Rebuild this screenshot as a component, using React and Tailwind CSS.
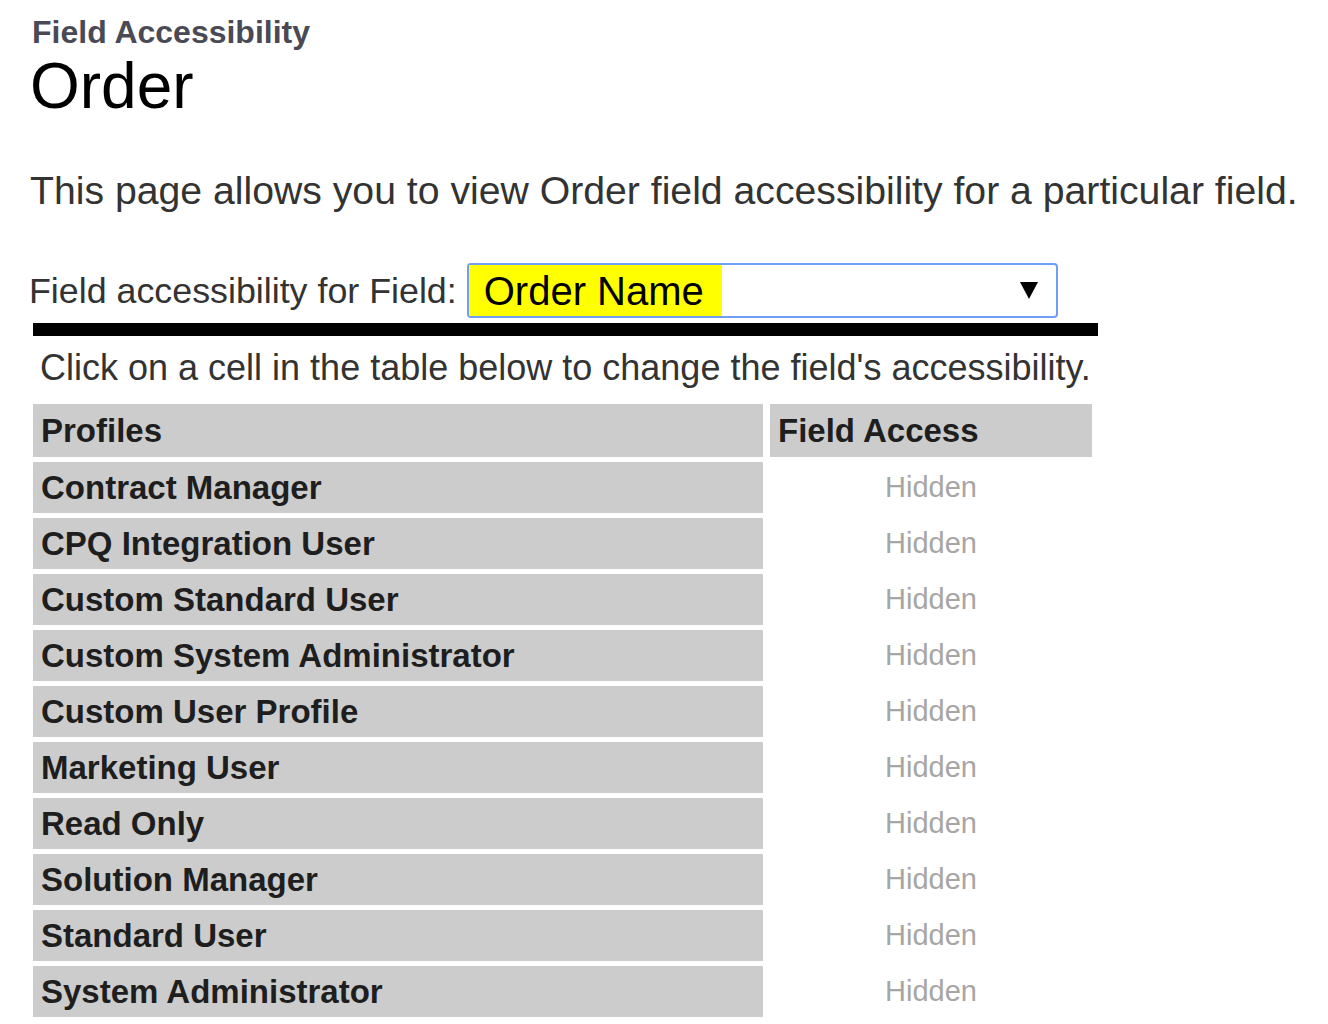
import React from "react";

const profiles = [
  "Contract Manager",
  "CPQ Integration User",
  "Custom Standard User",
  "Custom System Administrator",
  "Custom User Profile",
  "Marketing User",
  "Read Only",
  "Solution Manager",
  "Standard User",
  "System Administrator",
];

export default function App() {
  return (
    <div
      className="min-h-screen bg-white pl-[30px] pt-[17px] text-black"
      style={{ fontFamily: '"Liberation Sans", Arial, sans-serif' }}
    >
      <div className="ml-[2px] text-[32px] font-bold leading-[31px] text-[#4a4a56]">
        Field Accessibility
      </div>
      <h1 className="mt-[6px] text-[64px] leading-[64px] text-black">Order</h1>
      <p className="mt-[53px] text-[39.2px] leading-[40px] text-[#333333]">
        This page allows you to view Order field accessibility for a particular field.
      </p>

      <div className="mt-[52px] flex h-[55px] items-center">
        <span className="-ml-[1px] text-[35.8px] leading-[36px] text-[#333333]">
          Field accessibility for Field:
        </span>
        <div className="ml-[10px] flex h-[55px] w-[591px] items-center rounded-[4px] border-2 border-[#6f9ef2] bg-white">
          <span className="flex h-[51px] w-[253px] items-center bg-[#ffff00] pl-[15px] text-[40px] leading-[40px] text-black">
            Order Name
          </span>
          <svg
            className="ml-auto mr-[18px]"
            width="18"
            height="17"
            viewBox="0 0 18 17"
          >
            <polygon points="0,0 18,0 9,17" fill="#000" />
          </svg>
        </div>
      </div>

      <div className="ml-[3px] mt-[5px] h-[13px] w-[1065px] bg-black" />

      <p className="ml-[10px] mt-[14px] text-[36px] leading-[36px] text-[#333333]">
        Click on a cell in the table below to change the field's accessibility.
      </p>

      <div className="ml-[3px] mt-[18px] grid w-[1059px] grid-cols-[730px_322px] gap-x-[7px] gap-y-[5px] pb-[6px]">
        <div className="flex h-[53px] items-center bg-[#cccccc] pl-[8px] text-[33px] font-bold text-[#1e1e1e]">
          Profiles
        </div>
        <div className="flex h-[53px] items-center bg-[#cccccc] pl-[8px] text-[33px] font-bold text-[#1e1e1e]">
          Field Access
        </div>
        {profiles.map((p) => (
          <React.Fragment key={p}>
            <div className="flex h-[51px] items-center bg-[#cccccc] pl-[8px] text-[33px] font-bold text-[#1e1e1e]">
              {p}
            </div>
            <div className="flex h-[51px] items-center justify-center text-[29px] text-[#a6a6a6]">
              Hidden
            </div>
          </React.Fragment>
        ))}
      </div>
    </div>
  );
}
